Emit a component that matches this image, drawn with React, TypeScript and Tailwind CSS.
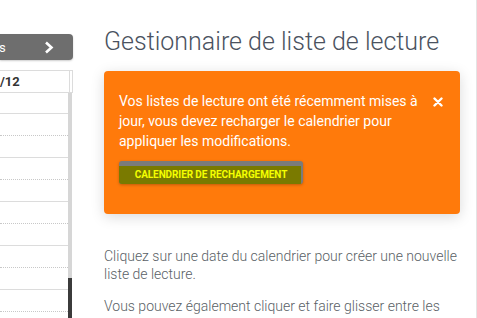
const rows = [
  { h: "h-[21px]", dotted: false },
  { h: "h-[22px]", dotted: true },
  { h: "h-[22px]", dotted: false },
  { h: "h-[22px]", dotted: true },
  { h: "h-[22px]", dotted: false },
  { h: "h-[22px]", dotted: true },
  { h: "h-[22px]", dotted: false },
  { h: "h-[22px]", dotted: true },
  { h: "h-[22px]", dotted: false },
  { h: "h-[22px]", dotted: true },
  { h: "h-[22px]", dotted: false },
]

const App = () => {
  return (
    <div className="w-[477px] h-[318px] overflow-hidden bg-white flex flex-row font-['Roboto',sans-serif]">
      {/* calendar strip */}
      <div className="w-[73px] shrink-0 pt-[34px] flex flex-col min-h-0">
        <div className="h-[26px] shrink-0 bg-[#6e6e6e] rounded-r-[4px] flex items-center justify-between pr-[19px] shadow-[0_1px_2px_rgba(0,0,0,0.2)]">
          <span className="text-white text-[13px] leading-none -ml-[1px]">s</span>
          <svg width="10" height="13" viewBox="0 0 10 13">
            <polyline points="2,1.5 7.5,6.5 2,11.5" fill="none" stroke="white" strokeWidth="2.6" />
          </svg>
        </div>
        <div className="mt-[10px] flex-1 min-h-0 flex flex-col border-t border-[#dcdcdc]">
          <div className="h-[22px] shrink-0 flex border-b border-[#dcdcdc]">
            <div className="w-[70px] border-r border-[#dcdcdc] text-[13px] font-bold text-[#333] leading-[21px]">/12</div>
            <div className="flex-1 border-r border-[#dcdcdc]" />
          </div>
          <div className="flex-1 min-h-0 flex flex-row overflow-hidden">
            <div className="flex-1 flex flex-col">
              {rows.map((r, i) => (
                <div
                  key={i}
                  className={`${r.h} shrink-0 border-b ${r.dotted ? "border-dotted border-[#c8c8c8]" : "border-[#dcdcdc]"}`}
                />
              ))}
            </div>
            <div className="w-[4px] mr-[1px] bg-[#d6d6d6] flex flex-col">
              <div className="flex-1" />
              <div className="h-[40px] shrink-0 bg-[#3b3b3b]" />
            </div>
          </div>
        </div>
      </div>

      {/* main */}
      <div className="w-[404px] shrink-0 border-r border-[#e4e4e4] pl-[31px] pt-[28px]">
        <h1 className="text-[25px] leading-[28px] font-light text-[#4a5260]">
          Gestionnaire de liste de lecture
        </h1>

        <div className="mt-[15px] w-[356px] bg-[#ff7a0b] rounded-[4px] shadow-[0_3px_14px_rgba(0,0,0,0.15)] pl-[15px] pr-[16px] pt-[20px] pb-[29px]">
          <div className="flex justify-between">
            <p className="w-[300px] text-[14px] leading-[20px] text-white">
              Vos listes de lecture ont été récemment mises à jour, vous devez recharger le calendrier pour appliquer les modifications.
            </p>
            <svg width="10" height="10" viewBox="0 0 10 10" className="mt-[6px] mr-[1px]">
              <path d="M1.5 1.5 L8.5 8.5 M8.5 1.5 L1.5 8.5" stroke="white" strokeWidth="2.4" strokeLinecap="round" />
            </svg>
          </div>
          <button className="relative mt-[10px] h-[23px] w-[184px] bg-[#7b7b7b] rounded-[3px] shadow-[0_1px_3px_rgba(0,0,0,0.25)] overflow-hidden">
            <span className="absolute left-0 right-[2px] top-[5px] bottom-0 bg-[#7a7a00]" />
            <span className="relative text-[10px] font-bold text-[#f4ff00] uppercase leading-none tracking-[-0.1px]">
              Calendrier de rechargement
            </span>
          </button>
        </div>

        <div className="mt-[33px] w-[360px] text-[14px] leading-[18px] text-[#5a5f66] font-light">
          <p className="mb-[14px]">Cliquez sur une date du calendrier pour créer une nouvelle liste de lecture.</p>
          <p>Vous pouvez également cliquer et faire glisser entre les</p>
        </div>
      </div>
    </div>
  )
}

export default App
